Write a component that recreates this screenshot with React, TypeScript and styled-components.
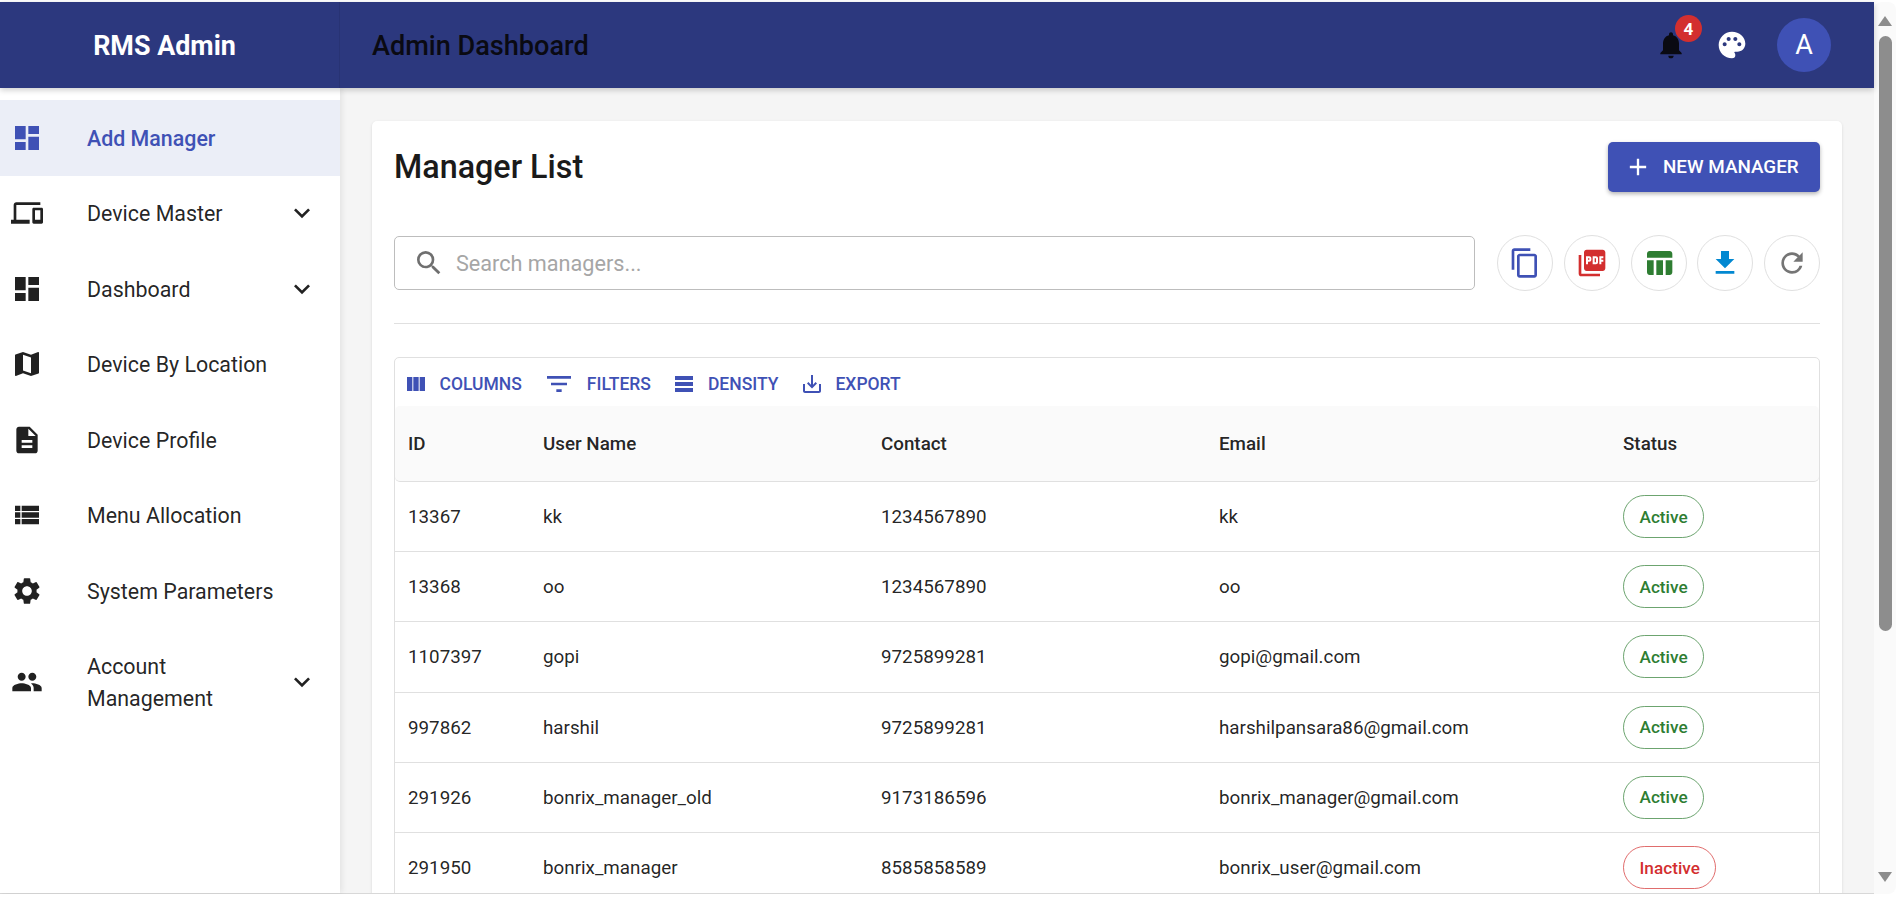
import styled, { createGlobalStyle } from 'styled-components';
import {
  MdAdd,
  MdContentCopy,
  MdDashboard,
  MdDescription,
  MdDevices,
  MdFileDownload,
  MdKeyboardArrowDown,
  MdMap,
  MdNotifications,
  MdPalette,
  MdPeople,
  MdPictureAsPdf,
  MdRefresh,
  MdSearch,
  MdSettings,
  MdTableChart,
  MdViewList,
} from 'react-icons/md';
import type { IconType } from 'react-icons';

const GlobalStyle = createGlobalStyle`
  html, body {
    margin: 0;
    padding: 0;
    height: 100%;
    overflow: hidden;
    background: #fff;
  }
  * {
    box-sizing: border-box;
  }
  body {
    font-family: 'Roboto', 'Liberation Sans', sans-serif;
    color: rgba(0, 0, 0, 0.87);
  }
`;

const Frame = styled.div`
  width: 1896px;
  height: 898px;
  display: flex;
  padding-top: 2px;
  overflow: hidden;
  border-bottom: 4px solid #fff;
`;

const Page = styled.div`
  flex: 1;
  min-width: 0;
  display: flex;
  flex-direction: column;
  border-bottom: 1px solid #d8d8d8;
`;

const Header = styled.header`
  height: 86px;
  flex-shrink: 0;
  display: flex;
  align-items: center;
  background: #2c387e;
  box-shadow: 0 2px 6px rgba(0, 0, 0, 0.2);
  position: relative;
  z-index: 2;
`;

const Brand = styled.div`
  width: 340px;
  height: 100%;
  display: flex;
  align-items: center;
  justify-content: center;
  padding: 2px 10px 0 0;
  color: #fff;
  font-size: 26.9px;
  font-weight: 700;
  border-right: 1px solid rgba(0, 0, 0, 0.08);
`;

const PageTitle = styled.div`
  flex: 1;
  padding: 2px 0 0 32px;
  color: #0a0a12;
  font-size: 27.1px;
  font-weight: 500;
`;

const HeaderActions = styled.div`
  display: flex;
  align-items: center;
  padding-right: 43px;
`;

const HeaderIcon = styled.div`
  position: relative;
  width: 32px;
  height: 32px;
  margin-right: 29px;
  display: flex;
  color: ${(p) => p.color};
`;

const Badge = styled.span`
  position: absolute;
  top: -14px;
  left: 20px;
  width: 27px;
  height: 27px;
  border-radius: 50%;
  background: #d32f2f;
  color: #fff;
  font-size: 17px;
  font-weight: 700;
  display: flex;
  align-items: center;
  justify-content: center;
`;

const Avatar = styled.div`
  width: 54px;
  height: 54px;
  border-radius: 50%;
  background: #3f51b5;
  color: #fff;
  font-size: 27px;
  display: flex;
  align-items: center;
  justify-content: center;
`;

const Body = styled.div`
  flex: 1;
  min-height: 0;
  display: flex;
`;

const Sidebar = styled.nav`
  width: 340px;
  flex-shrink: 0;
  background: #fff;
  padding-top: 12px;
  box-shadow: 2px 0 6px rgba(0, 0, 0, 0.08);
  position: relative;
  z-index: 1;
`;

const NavItem = styled.div<{ $active?: boolean }>`
  display: flex;
  align-items: center;
  padding: 21.75px 22px 21.75px 11px;
  background: ${(p) => (p.$active ? '#ebeef7' : 'transparent')};
  color: ${(p) => (p.$active ? '#3f51b5' : 'rgba(0, 0, 0, 0.87)')};
  font-size: 21.4px;
  font-weight: ${(p) => (p.$active ? 500 : 400)};
  line-height: 32px;
`;

const NavIcon = styled.span`
  width: 32px;
  height: 32px;
  margin-right: 44px;
  flex-shrink: 0;
  display: flex;
`;

const NavLabel = styled.span`
  flex: 1;
  padding-top: 1.2px;
  margin-bottom: -1.2px;
`;

const Chevron = styled.span`
  width: 32px;
  height: 32px;
  flex-shrink: 0;
  display: flex;
  color: rgba(0, 0, 0, 0.87);
`;

const Main = styled.main`
  flex: 1;
  min-width: 0;
  background: #f5f5f5;
  padding: 33px 32px 0;
  overflow: hidden;
`;

const Card = styled.section`
  background: #fff;
  border-radius: 5px 5px 0 0;
  padding: 21px 22px 0 22px;
  box-shadow: 0 1px 3px rgba(0, 0, 0, 0.12);
  height: 900px;
`;

const CardTop = styled.div`
  height: 50px;
  display: flex;
  align-items: center;
  justify-content: space-between;
`;

const CardTitle = styled.h1`
  margin: 0;
  font-size: 32.3px;
  font-weight: 500;
  color: #1a1a1a;
`;

const PrimaryButton = styled.button`
  width: 212px;
  height: 50px;
  border: 0;
  border-radius: 5px;
  background: #3f51b5;
  color: #fff;
  font-family: inherit;
  font-size: 18.85px;
  font-weight: 500;
  display: flex;
  align-items: center;
  padding: 0 0 1px 16px;
  gap: 11px;
  box-shadow: 0 2px 4px rgba(0, 0, 0, 0.3);
`;

const SearchRow = styled.div`
  margin-top: 43px;
  display: flex;
  align-items: center;
  gap: 10.75px;
`;

const SearchBox = styled.div`
  width: 1081px;
  height: 54px;
  margin-right: 11.25px;
  border: 1px solid #bdbdbd;
  border-radius: 5px;
  display: flex;
  align-items: center;
  padding-left: 18px;
  gap: 11px;
  color: #6f6f6f;
`;

const Placeholder = styled.span`
  font-size: 21.65px;
  color: #a6a6a6;
`;

const RoundButton = styled.div`
  width: 56px;
  height: 56px;
  flex-shrink: 0;
  border-radius: 50%;
  border: 1px solid #e0e0e0;
  display: flex;
  align-items: center;
  justify-content: center;
  color: ${(p) => p.color};
`;

const Divider = styled.hr`
  margin: 32px 0 33px;
  border: 0;
  border-top: 1px solid #e0e0e0;
`;

const Table = styled.div`
  border: 1px solid #e0e0e0;
  border-radius: 5px 5px 0 0;
`;

const Toolbar = styled.div`
  height: 48px;
  display: flex;
  align-items: center;
  padding: 4px 0 0 9px;
  gap: 21.5px;
`;

const ToolButton = styled.div`
  display: flex;
  align-items: center;
  gap: 11.5px;
  color: #3f51b5;
  font-size: 17.5px;
  font-weight: 500;
`;

const Row = styled.div`
  display: grid;
  grid-template-columns: 135px 338px 338px 404px 1fr;
  align-items: center;
  height: 70.2px;
  padding: 1px 0 0 13px;
  border-bottom: 1px solid #e0e0e0;
  font-size: 18.8px;
  color: rgba(0, 0, 0, 0.87);
`;

const HeadRow = styled(Row)`
  height: 76px;
  padding-top: 0;
  background: #fafafa;
  border-radius: 5px;
  font-weight: 500;
`;

const StatusChip = styled.span<{ $on: boolean }>`
  justify-self: start;
  height: 43px;
  margin-top: -1px;
  padding: 0 15.5px;
  border-radius: 22px;
  display: flex;
  align-items: center;
  font-size: 17.2px;
  font-weight: 500;
  color: ${(p) => (p.$on ? '#2e7d32' : '#d32f2f')};
  border: 1px solid ${(p) => (p.$on ? 'rgba(46, 125, 50, 0.7)' : 'rgba(211, 47, 47, 0.7)')};
`;

const Scrollbar = styled.div`
  width: 22px;
  flex-shrink: 0;
  background: #fafafa;
  border-radius: 8px 8px 8px 0;
  display: flex;
  flex-direction: column;
  align-items: center;
`;

const ScrollArrow = styled.svg`
  width: 16px;
  height: 12px;
  flex-shrink: 0;
  fill: #8d8d8d;
`;

const ScrollThumb = styled.div`
  width: 13px;
  height: 595px;
  margin-top: 9px;
  border-radius: 7px;
  background: #8d8d8d;
`;

const ScrollSpace = styled.div`
  flex: 1;
`;

const ColumnsIcon = () => (
  <svg width="24" height="24" viewBox="0 0 24 24" fill="currentColor">
    <path d="M14.67 5v14H9.33V5h5.34zm1 14H21V5h-5.33v14zm-7.34 0V5H3v14h5.33z" />
  </svg>
);

const FilterIcon = () => (
  <svg width="32" height="24" viewBox="0 0 24 18" fill="currentColor">
    <path d="M10 15h4v-2h-4v2zM3 3v2h18V3H3zm3 7h12V8H6v2z" />
  </svg>
);

const DensityIcon = () => (
  <svg width="24" height="24" viewBox="0 0 24 24" fill="currentColor">
    <path d="M21 8H3V4h18v4zm0 2H3v4h18v-4zm0 6H3v4h18v-4z" />
  </svg>
);

const ExportIcon = () => (
  <svg width="24" height="24" viewBox="0 0 24 24" fill="currentColor">
    <path d="M19 12v7H5v-7H3v7c0 1.1.9 2 2 2h14c1.1 0 2-.9 2-2v-7h-2zm-6 .67l2.59-2.58L17 11.5l-5 5-5-5 1.41-1.41L11 12.67V3h2z" />
  </svg>
);

type NavEntry = { label: string; icon: IconType; active?: boolean; expand?: boolean };

const navItems: NavEntry[] = [
  { label: 'Add Manager', icon: MdDashboard, active: true },
  { label: 'Device Master', icon: MdDevices, expand: true },
  { label: 'Dashboard', icon: MdDashboard, expand: true },
  { label: 'Device By Location', icon: MdMap },
  { label: 'Device Profile', icon: MdDescription },
  { label: 'Menu Allocation', icon: MdViewList },
  { label: 'System Parameters', icon: MdSettings },
  { label: 'Account Management', icon: MdPeople, expand: true },
];

const roundButtons: { icon: IconType; color: string }[] = [
  { icon: MdContentCopy, color: '#3f51b5' },
  { icon: MdPictureAsPdf, color: '#d32f2f' },
  { icon: MdTableChart, color: '#2e7d32' },
  { icon: MdFileDownload, color: '#0288d1' },
  { icon: MdRefresh, color: '#757575' },
];

const managers = [
  { id: '13367', name: 'kk', contact: '1234567890', email: 'kk', active: true },
  { id: '13368', name: 'oo', contact: '1234567890', email: 'oo', active: true },
  { id: '1107397', name: 'gopi', contact: '9725899281', email: 'gopi@gmail.com', active: true },
  { id: '997862', name: 'harshil', contact: '9725899281', email: 'harshilpansara86@gmail.com', active: true },
  { id: '291926', name: 'bonrix_manager_old', contact: '9173186596', email: 'bonrix_manager@gmail.com', active: true },
  { id: '291950', name: 'bonrix_manager', contact: '8585858589', email: 'bonrix_user@gmail.com', active: false },
];

const App = () => {
  return (
    <>
      <GlobalStyle />
      <Frame>
        <Page>
          <Header>
            <Brand>RMS Admin</Brand>
            <PageTitle>Admin Dashboard</PageTitle>
            <HeaderActions>
              <HeaderIcon color="#0a0a12">
                <MdNotifications size={32} />
                <Badge>4</Badge>
              </HeaderIcon>
              <HeaderIcon color="#fff">
                <MdPalette size={32} />
              </HeaderIcon>
              <Avatar>A</Avatar>
            </HeaderActions>
          </Header>
          <Body>
            <Sidebar>
              {navItems.map((item) => (
                <NavItem key={item.label} $active={item.active}>
                  <NavIcon>
                    <item.icon size={32} />
                  </NavIcon>
                  <NavLabel>{item.label}</NavLabel>
                  {item.expand && (
                    <Chevron>
                      <MdKeyboardArrowDown size={32} />
                    </Chevron>
                  )}
                </NavItem>
              ))}
            </Sidebar>
            <Main>
              <Card>
                <CardTop>
                  <CardTitle>Manager List</CardTitle>
                  <PrimaryButton>
                    <MdAdd size={28} />
                    NEW MANAGER
                  </PrimaryButton>
                </CardTop>
                <SearchRow>
                  <SearchBox>
                    <MdSearch size={32} />
                    <Placeholder>Search managers...</Placeholder>
                  </SearchBox>
                  {roundButtons.map((b) => (
                    <RoundButton key={b.color} color={b.color}>
                      <b.icon size={32} />
                    </RoundButton>
                  ))}
                </SearchRow>
                <Divider />
                <Table>
                  <Toolbar>
                    <ToolButton>
                      <ColumnsIcon />
                      COLUMNS
                    </ToolButton>
                    <ToolButton>
                      <FilterIcon />
                      FILTERS
                    </ToolButton>
                    <ToolButton>
                      <DensityIcon />
                      DENSITY
                    </ToolButton>
                    <ToolButton>
                      <ExportIcon />
                      EXPORT
                    </ToolButton>
                  </Toolbar>
                  <HeadRow>
                    <span>ID</span>
                    <span>User Name</span>
                    <span>Contact</span>
                    <span>Email</span>
                    <span>Status</span>
                  </HeadRow>
                  {managers.map((m) => (
                    <Row key={m.id}>
                      <span>{m.id}</span>
                      <span>{m.name}</span>
                      <span>{m.contact}</span>
                      <span>{m.email}</span>
                      <StatusChip $on={m.active}>{m.active ? 'Active' : 'Inactive'}</StatusChip>
                    </Row>
                  ))}
                </Table>
              </Card>
            </Main>
          </Body>
        </Page>
        <Scrollbar>
          <ScrollArrow viewBox="0 0 16 12" style={{ marginTop: 13 }}>
            <path d="M8 1 L15 11 L1 11 Z" />
          </ScrollArrow>
          <ScrollThumb />
          <ScrollSpace />
          <ScrollArrow viewBox="0 0 16 12" style={{ marginBottom: 11 }}>
            <path d="M1 1 L15 1 L8 11 Z" />
          </ScrollArrow>
        </Scrollbar>
      </Frame>
    </>
  );
};

export default App;
